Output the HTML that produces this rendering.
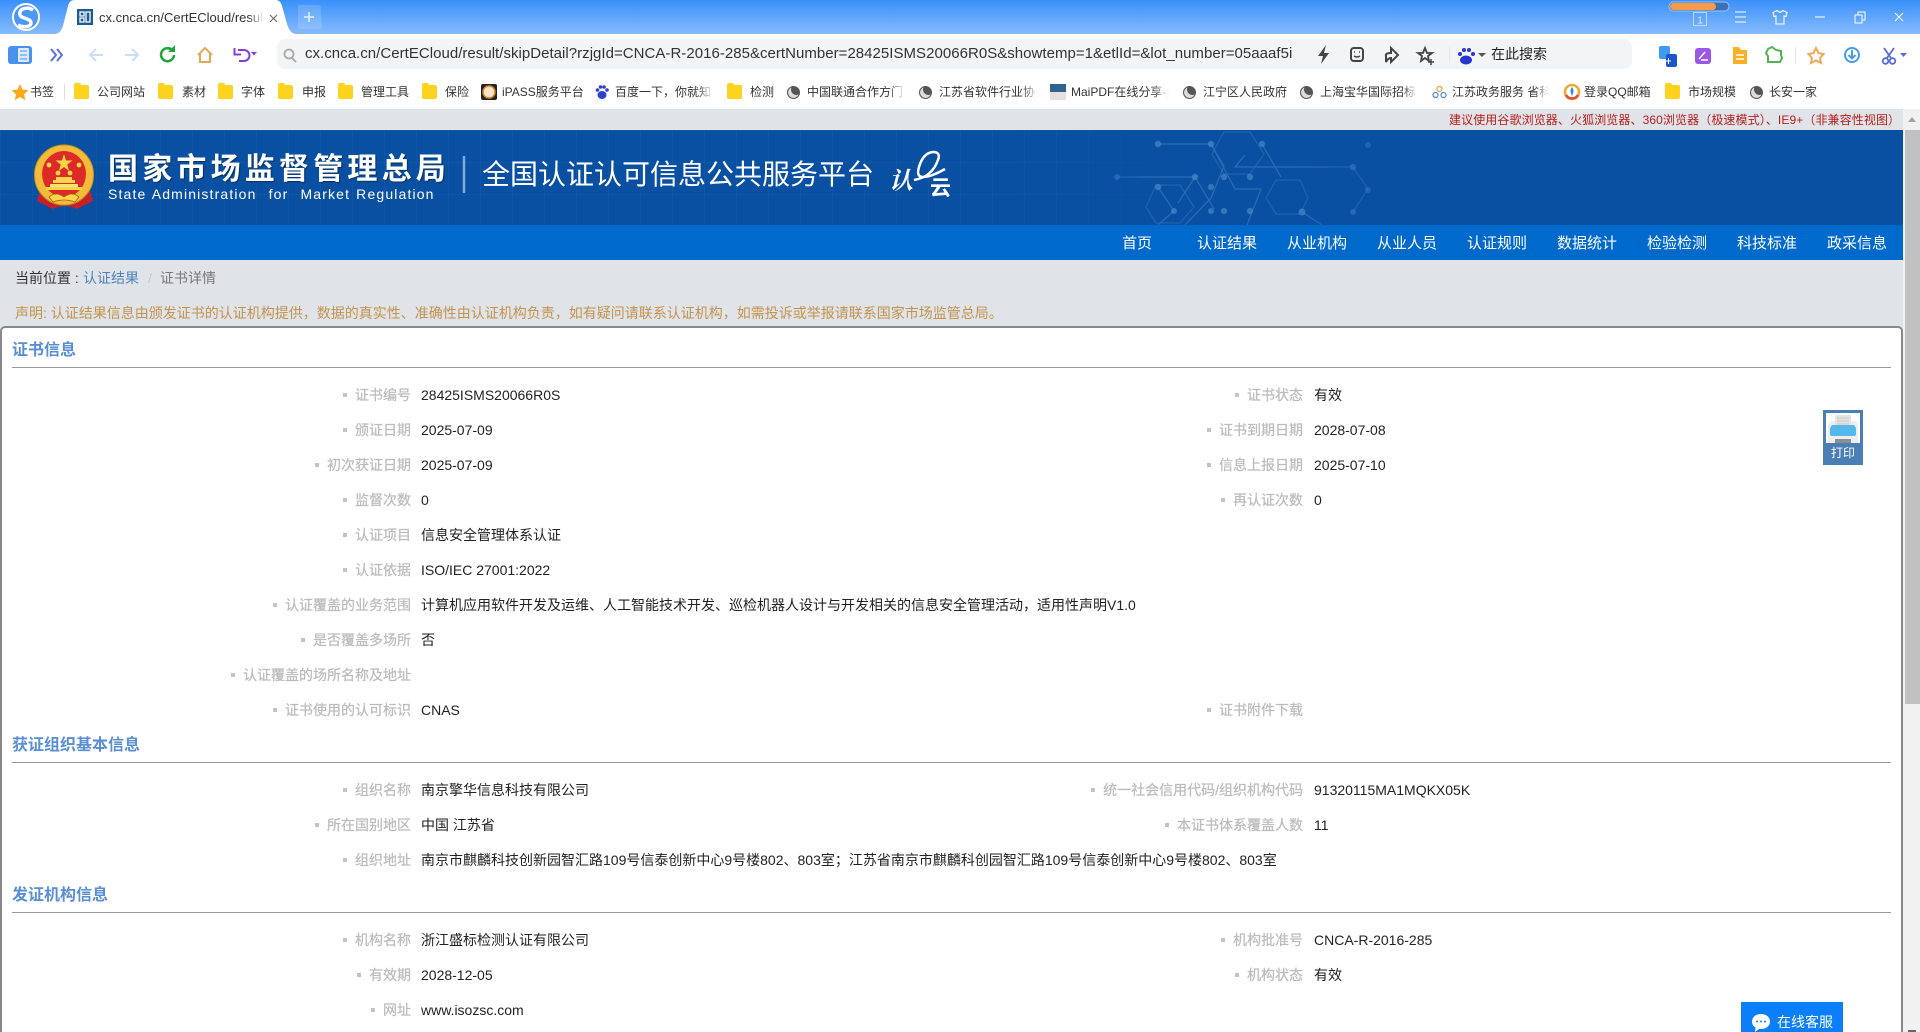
<!DOCTYPE html>
<html lang="zh-CN"><head><meta charset="utf-8"><title>证书详情</title>
<style>
*{box-sizing:border-box;margin:0;padding:0}
html,body{width:1920px;height:1032px;overflow:hidden;background:#e0e4e8;font-family:"Liberation Sans","Noto Sans CJK SC",sans-serif;font-size:14px;color:#222}
#wrap{position:relative;width:1920px;height:1032px;overflow:hidden}
.a{position:absolute;white-space:nowrap}
#tabs{left:0;top:0;width:1920px;height:34px;background:linear-gradient(#3a90fb,#87bbfd)}
#addr{left:0;top:34px;width:1920px;height:40px;background:#fff}
#pill{left:277px;top:39px;width:1355px;height:30px;background:#f3f4f6;border-radius:8px}
#bm{left:0;top:74px;width:1920px;height:35px;background:#fff}
.b{top:84px;font-size:12px;line-height:17px;color:#333}
.f{top:85px;width:15px;height:14px;background:#fdd31d;border-radius:2px}
.f:before{content:"";position:absolute;left:0;top:-2px;width:7px;height:3px;background:#fdd31d;border-radius:2px 2px 0 0}
.g{top:86px;width:13px;height:13px;border-radius:50%;background:#555;border:1.5px solid #555;box-shadow:inset 3px -3px 0 #ddd}
.fade{overflow:hidden}
.fade:after{content:"";position:absolute;right:0;top:0;width:16px;height:100%;background:linear-gradient(90deg,rgba(255,255,255,0),#fff)}
#hd{left:0;top:130px;width:1903px;height:95px;background:#0a50a2}
#nav{left:0;top:225px;width:1903px;height:35px;background:#0069cc}
.n{top:234px;color:#fff;font-size:15px;line-height:20px}
#panel{left:0;top:326px;width:1903px;height:706px;background:#fff;border:2px solid #888;border-bottom:0;border-radius:5px 5px 0 0}
.h{left:12px;color:#5a8ed2;font-size:16px;font-weight:bold;line-height:22px}
.l{left:12px;width:1879px;height:1px;background:#999}
.k{text-align:right;font-size:14px;line-height:20px;color:#bcbcbc;-webkit-text-stroke:.25px #bcbcbc}
.k:before{content:"";display:inline-block;width:4px;height:4px;background:#c4c4c4;margin-right:8px;vertical-align:3px}
.k1{left:0;width:411px}
.k2{left:900px;width:403px}
.v{font-size:14px;line-height:20px;color:#222}
.v1{left:421px}.v2{left:1314px}
</style></head><body><div id="wrap">

<div class="a" id="tabs"></div>
<svg class="a" style="left:0;top:0" width="330" height="34" viewBox="0 0 330 34">
<circle cx="26" cy="17" r="13" fill="#4d97f5" stroke="#fff" stroke-width="2"/>
<path d="M33 10C27 6 18 9 20 15c1.500 4 11 3 11 8 0 4-8 5-13 2" fill="none" stroke="#fff" stroke-width="3.500"/>
<path d="M54 34C60 34 62 30 64 22L68 6C69 2 71 0 75 0H275C279 0 281 2 282 6L287 24C289 30 291 34 297 34Z" fill="#fff"/>
<rect x="77" y="9" width="16" height="16" fill="#1c5d91"/>
<path d="M80 12h4v4h-4zM80 18h4v4h-4zM86 12h4v10h-4z" fill="none" stroke="#fff" stroke-width="1.300"/>
<path d="M270 15l7 7M277 15l-7 7" stroke="#666" stroke-width="1"/>
<path d="M298 5h20a3 3 0 0 1 3 3l1 18a3 3 0 0 1-3 3h-18a3 3 0 0 1-3-3z" fill="#fff" opacity=".15"/>
<path d="M309 12v10M304 17h10" stroke="#fff" stroke-width="1.800" opacity=".7"/>
</svg>
<div class="a fade" style="left:99px;top:9px;width:165px;font-size:13px;line-height:18px;color:#333">cx.cnca.cn/CertECloud/result/</div>
<svg class="a" style="left:1660px;top:0" width="260" height="34" viewBox="0 0 260 34">
<rect x="9" y="2" width="60" height="9" rx="4.500" fill="#3b70b5" stroke="#9cc4f2"/>
<rect x="10" y="3" width="46" height="7" rx="3.500" fill="#f99a4a"/>
<rect x="33.500" y="12.500" width="13" height="13" fill="none" stroke="#bcd9fb"/>
<text x="40" y="23.500" font-size="10" font-family="Liberation Sans" fill="#d8e9fd" text-anchor="middle">1</text>
<path d="M75 12h11M75 17h11M75 22h11" stroke="#fff" stroke-width="1"/>
<path d="M120 12.500l-3-2-4 2 1 4 2-.5v8h8v-8l2 .5 1-4-4-2z" fill="none" stroke="#fff" stroke-width="1.100"/>
<path d="M155 17h10" stroke="#fff" stroke-width="1"/>
<path d="M195 15h7v8h-7zM198 15v-3h7v8h-3" fill="none" stroke="#fff" stroke-width="1"/>
<path d="M235 13l8 8M243 13l-8 8" stroke="#fff" stroke-width="1"/>
</svg>

<div class="a" id="addr"></div>
<div class="a" id="pill"></div>
<svg class="a" style="left:0;top:34px" width="277" height="40" viewBox="0 0 277 40">
<rect x="8" y="12" width="24" height="18" rx="3" fill="#4a90ee"/><rect x="18" y="14" width="11" height="14" rx="1" fill="#dceafc"/>
<path d="M20 17h7M20 21h7M20 25h7" stroke="#4a90ee"/>
<path d="M51 15l5 6-5 6M57 15l5 6-5 6" fill="none" stroke="#5b6fe2" stroke-width="2"/>
<path d="M103 21H90M96 15l-6 6 6 6" fill="none" stroke="#c8dff8" stroke-width="2"/>
<path d="M125 21h13M132 15l6 6-6 6" fill="none" stroke="#c8dff8" stroke-width="2"/>
<path d="M174 21a6.500 6.500 0 1 1-2-5" fill="none" stroke="#1fa63a" stroke-width="2.500"/><path d="M175 11v7h-7z" fill="#1fa63a"/>
<path d="M198 21l7-7 7 7M200 20v8h10v-8" fill="none" stroke="#e0a958" stroke-width="2"/>
<path d="M238 16h6a5.500 5.500 0 0 1 0 11h-5M234.500 14v6.500h6.500" fill="none" stroke="#8a3fd1" stroke-width="2"/><path d="M251 18h6l-3 3.500z" fill="#8a3fd1"/>
</svg>
<svg class="a" style="left:280px;top:46px" width="20" height="18"><circle cx="9" cy="8" r="4.500" fill="none" stroke="#aaa" stroke-width="1.800"/><path d="M12 12l4 4" stroke="#aaa" stroke-width="1.800"/></svg>
<div class="a" style="left:305px;top:44px;width:990px;overflow:hidden;font-size:15px;line-height:20px;letter-spacing:.03px;color:#333">cx.cnca.cn/CertECloud/result/skipDetail?rzjgId=CNCA-R-2016-285&amp;certNumber=28425ISMS20066R0S&amp;showtemp=1&amp;etlId=&amp;lot_number=05aaaf5i</div>
<svg class="a" style="left:1310px;top:34px" width="180" height="40" viewBox="0 0 180 40">
<path d="M16 11l-8 11h5l-2 8 8-11h-5z" fill="#444"/>
<rect x="41" y="14" width="12" height="13" rx="3" fill="none" stroke="#444" stroke-width="2"/><path d="M44 18h1M49 18h1M44 22q3 2 6 0" stroke="#444" stroke-width="1.500" fill="none"/>
<path d="M76 28v-6q-1-3 5-3v-5l7 7-7 7v-4q-3 0-5 4z" fill="none" stroke="#444" stroke-width="2"/>
<path d="M115 14l2 5h5l-4 3 1 5-4-3-4 3 1-5-4-3h5z" fill="none" stroke="#444" stroke-width="1.800"/><path d="M121 25v6M118 28h6" stroke="#444" stroke-width="1.500"/>
<path d="M139.500 13v16" stroke="#e6e7ea"/>
<ellipse cx="156" cy="26" rx="6" ry="4.500" fill="#2a35d0"/><circle cx="150" cy="20" r="2" fill="#2a35d0"/><circle cx="154" cy="16" r="2" fill="#2a35d0"/><circle cx="159" cy="16" r="2" fill="#2a35d0"/><circle cx="163" cy="20" r="2" fill="#2a35d0"/>
<path d="M168 19h8l-4 4z" fill="#555"/>
</svg>
<div class="a" style="left:1491px;top:44px;font-size:14px;line-height:20px;color:#222">在此搜索</div>
<svg class="a" style="left:1650px;top:34px" width="270" height="40" viewBox="0 0 270 40">
<rect x="9" y="12" width="11" height="13" rx="2" fill="#3f9bf2"/><rect x="16" y="20" width="11" height="13" rx="2" fill="#1d55d0"/>
<path d="M18.500 24v6M16 27h5" stroke="#fff"/>
<rect x="45" y="14" width="16" height="16" rx="3" fill="#9a58e8"/><path d="M49 25l6-7M51 26h7" stroke="#fff" stroke-width="1.500"/>
<path d="M83 13h6l2 3h6v14H83z" fill="#fbb024"/><path d="M86 21h8M94 25h-8" stroke="#fff" stroke-width="1.500"/>
<path d="M118 15l4-2 4 3 5 1v4l1 3-2 4h-12v-6l-2-3z" fill="none" stroke="#52b254" stroke-width="2"/>
<path d="M145.500 13v16" stroke="#e2e2e2"/>
<path d="M166 14l2.500 5 5 1-3.500 4 1 5-5-2.500-5 2.500 1-5-3.500-4 5-1z" fill="none" stroke="#f0a85a" stroke-width="2"/>
<circle cx="202" cy="21" r="7" fill="none" stroke="#4a9aec" stroke-width="2"/><path d="M202 16v8M198.500 21l3.500 3.500 3.500-3.500" stroke="#4a9aec" stroke-width="2" fill="none"/>
<path d="M234 14l7 10M244 14l-7 10" stroke="#5b6ad6" stroke-width="1.800"/><circle cx="235.500" cy="27" r="2.800" fill="none" stroke="#5b6ad6" stroke-width="1.800"/><circle cx="242.500" cy="27" r="2.800" fill="none" stroke="#5b6ad6" stroke-width="1.800"/>
<path d="M250 19h7l-3.500 4z" fill="#5b6ad6"/>
</svg>

<div class="a" id="bm"></div>
<svg class="a" style="left:10px;top:83px" width="20" height="18"><path d="M10 1l2.500 5.500 6 .7-4.500 4 1.300 6L10 14l-5.300 3.200 1.300-6-4.500-4 6-.7z" fill="#fba81a"/></svg>
<div class="a b" style="left:30px">书签</div>
<div class="a" style="left:64px;top:84px;width:1px;height:16px;background:#ddd"></div>
<div class="a f" style="left:74px"></div><div class="a b" style="left:97px">公司网站</div>
<div class="a f" style="left:158px"></div><div class="a b" style="left:182px">素材</div>
<div class="a f" style="left:218px"></div><div class="a b" style="left:241px">字体</div>
<div class="a f" style="left:278px"></div><div class="a b" style="left:302px">申报</div>
<div class="a f" style="left:338px"></div><div class="a b" style="left:361px">管理工具</div>
<div class="a f" style="left:422px"></div><div class="a b" style="left:445px">保险</div>
<svg class="a" style="left:481px;top:84px" width="16" height="16"><rect width="16" height="16" rx="2" fill="#222"/><circle cx="8" cy="8" r="6" fill="#f6e3c8" stroke="#d28a2a" stroke-width="1.500"/></svg>
<div class="a b" style="left:502px">iPASS服务平台</div>
<svg class="a" style="left:595px;top:84px" width="14" height="16"><ellipse cx="7" cy="11" rx="4.500" ry="4" fill="#3140c8"/><circle cx="2.500" cy="6" r="1.800" fill="#3140c8"/><circle cx="5.500" cy="3" r="1.800" fill="#3140c8"/><circle cx="9" cy="3" r="1.800" fill="#3140c8"/><circle cx="12" cy="6" r="1.800" fill="#3140c8"/></svg>
<div class="a b fade" style="left:615px;width:98px">百度一下，你就知道</div>
<div class="a f" style="left:727px"></div><div class="a b" style="left:750px">检测</div>
<div class="a g" style="left:787px"></div><div class="a b fade" style="left:807px;width:98px">中国联通合作方门户</div>
<div class="a g" style="left:919px"></div><div class="a b fade" style="left:939px;width:99px">江苏省软件行业协会</div>
<svg class="a" style="left:1050px;top:84px" width="16" height="16"><rect width="16" height="8" fill="#2e6290"/><rect y="8" width="16" height="8" fill="#eadde2"/></svg>
<div class="a b fade" style="left:1071px;width:98px">MaiPDF在线分享-免</div>
<div class="a g" style="left:1183px"></div><div class="a b" style="left:1203px">江宁区人民政府</div>
<div class="a g" style="left:1300px"></div><div class="a b fade" style="left:1320px;width:98px">上海宝华国际招标有</div>
<svg class="a" style="left:1432px;top:85px" width="15" height="14"><circle cx="7.500" cy="4" r="2.500" fill="none" stroke="#e9a14c" stroke-width="1.300"/><circle cx="3.500" cy="10" r="2.500" fill="none" stroke="#5b8fd0" stroke-width="1.300"/><circle cx="11.500" cy="10" r="2.500" fill="none" stroke="#5b8fd0" stroke-width="1.300"/></svg>
<div class="a b fade" style="left:1452px;width:98px">江苏政务服务 省科技</div>
<svg class="a" style="left:1563px;top:83px" width="18" height="18"><circle cx="9" cy="9" r="7" fill="#fff" stroke="#f2a82c" stroke-width="2.500"/><path d="M3 12a7 7 0 0 0 12 0" fill="none" stroke="#e54b3c" stroke-width="2.500"/><path d="M9 4q3 3 0 9q-3-6 0-9" fill="#2a8fe8"/></svg>
<div class="a b" style="left:1584px">登录QQ邮箱</div>
<div class="a f" style="left:1665px"></div><div class="a b" style="left:1688px">市场规模</div>
<div class="a g" style="left:1750px"></div><div class="a b" style="left:1769px">长安一家</div>

<div class="a" style="left:1449px;top:112px;font-size:12px;line-height:16px;letter-spacing:.1px;color:#b71c1c">建议使用谷歌浏览器、火狐浏览器、360浏览器（极速模式）、IE9+（非兼容性视图）</div>

<div class="a" style="left:1903px;top:109px;width:17px;height:923px;background:#f1f1f1"></div>
<div class="a" style="left:1905px;top:130px;width:15px;height:574px;background:#c1c1c1"></div>
<svg class="a" style="left:1904px;top:112px" width="16" height="14"><path d="M4 10l4-5 4 5z" fill="#a3a3a3"/></svg>
<svg class="a" style="left:1904px;top:1028px" width="16" height="4"><rect x="4" y="2" width="8" height="2" fill="#666"/></svg>

<div class="a" id="hd"></div>
<svg class="a" style="left:0;top:130px" width="1903" height="95" viewBox="0 0 1903 95">
<defs>
<pattern id="gr" width="32" height="32" patternUnits="userSpaceOnUse"><path d="M32 0H0V32" fill="none" stroke="#4a8ad0" stroke-width="1" opacity=".2"/></pattern>
<linearGradient id="fg" x1="0" x2="1"><stop offset="0" stop-color="#fff"/><stop offset=".8" stop-color="#fff"/><stop offset="1" stop-color="#000"/></linearGradient>
<mask id="gm"><rect width="1200" height="95" fill="url(#fg)"/></mask>
<linearGradient id="hf" x1="0" x2="1"><stop offset="0" stop-color="#fff" stop-opacity=".15"/><stop offset=".15" stop-color="#fff"/><stop offset=".6" stop-color="#fff"/><stop offset="1" stop-color="#fff" stop-opacity=".05"/></linearGradient>
<mask id="hm" maskUnits="userSpaceOnUse" x="1090" y="0" width="350" height="95"><rect x="1090" width="350" height="95" fill="url(#hf)"/></mask>
<radialGradient id="glow" cx=".5" cy="1" r=".5"><stop offset="0" stop-color="#4a9ad4" stop-opacity=".5"/><stop offset="1" stop-color="#4a9ad4" stop-opacity="0"/></radialGradient>
</defs>
<rect width="1200" height="95" fill="url(#gr)" mask="url(#gm)"/>
<ellipse cx="1280" cy="95" rx="110" ry="70" fill="url(#glow)"/>
<g mask="url(#hm)" opacity=".65">
<g fill="none" stroke="#6ba6de" stroke-width="1.200" opacity=".5">
<path d="M1158 14h53l13 22-13 32-26 27M1211 14l24 45h26M1117 47h78l19 32M1195 47l-17 26M1261 59l-14 36M1353 37h-118l10-12M1158 57l16 24-16 14M1262 14l19 33M1353 82l15-23-15-22M1302 82l20 13"/>
<path d="M1180 55l14 22-14 16h-24l-10-16 10-22zM1250 2l14 22-14 20h-26l-12-20 12-22zM1300 50l8 18-8 16h-24l-10-16 10-18z" opacity=".7"/>
</g>
<g fill="#6da9e0" opacity=".65">
<circle cx="1158" cy="14" r="3.200"/><circle cx="1211" cy="14" r="3.200"/><circle cx="1262" cy="14" r="3.200"/><circle cx="1368" cy="15" r="3"/><circle cx="1117" cy="47" r="3"/><circle cx="1195" cy="47" r="3.200"/><circle cx="1224" cy="47" r="3.200"/><circle cx="1250" cy="47" r="3.200"/><circle cx="1353" cy="37" r="3.200"/><circle cx="1158" cy="57" r="3.200"/><circle cx="1211" cy="57" r="3.200"/><circle cx="1368" cy="60" r="3"/><circle cx="1174" cy="81" r="3"/><circle cx="1211" cy="81" r="3"/><circle cx="1224" cy="81" r="3.200"/><circle cx="1250" cy="81" r="3.200"/><circle cx="1302" cy="82" r="3.500"/><circle cx="1353" cy="82" r="3"/>
</g></g>
<!-- emblem -->
<g transform="translate(35 17)">
<path d="M6 40L2 54l16 8q12-6 24 0l16-8-4-14z" fill="#c8202a"/>
<ellipse cx="29" cy="28" rx="29.500" ry="30" fill="#f2bc3a" stroke="#c98f22" stroke-width="1"/>
<ellipse cx="29" cy="27" rx="22" ry="23" fill="#de2a27"/>
<path d="M29 7l2 6.500h6.500l-5.300 4 2 6.500-5.200-4-5.200 4 2-6.500-5.300-4H27z" fill="#f8d648"/>
<g fill="#f8d648"><circle cx="14" cy="18" r="2.400"/><circle cx="44" cy="18" r="2.400"/><circle cx="23" cy="26" r="2.400"/><circle cx="35" cy="26" r="2.400"/>
<rect x="18" y="33" width="22" height="3"/><rect x="21" y="30" width="16" height="3"/><rect x="11" y="40" width="36" height="3"/><rect x="15" y="37" width="28" height="3" fill="#fbe17b"/></g>
<path d="M14 50q7-6 15 0q8-6 15 0l-4 5q-11-4-22 0z" fill="#f8d648" stroke="#a8571d" stroke-width=".7"/>
</g>
<path d="M464 26V63" stroke="#7ea9d8" stroke-width="2.500"/>
<path d="M914 50q18-3 24-20q3-8-5-8q-10 1-14 15q-3 10 4 10q8 0 22-8" fill="none" stroke="#fff" stroke-width="2.500"/>
</svg>
<div class="a" style="left:108px;top:149px;font-size:30px;font-weight:bold;line-height:42px;letter-spacing:4.200px;color:#fff;text-shadow:1px 1px 1px #06305f">国家市场监督管理总局</div>
<div class="a" style="left:108px;top:185px;font-size:14px;line-height:18px;letter-spacing:1.150px;word-spacing:1px;color:#fff">State Administration&nbsp; for&nbsp; Market Regulation</div>
<div class="a" style="left:482px;top:155px;font-size:28px;line-height:40px;color:#fff">全国认证认可信息公共服务平台</div>
<div class="a" style="left:889px;top:163px;font-size:24px;line-height:32px;font-style:italic;font-weight:bold;color:#fff;font-family:'Noto Serif CJK SC',serif">认</div>
<div class="a" style="left:930px;top:176px;font-size:21px;line-height:26px;font-weight:bold;color:#fff">云</div>

<div class="a" id="nav"></div>
<div class="a n" style="left:1122px">首页</div>
<div class="a n" style="left:1197px">认证结果</div>
<div class="a n" style="left:1287px">从业机构</div>
<div class="a n" style="left:1377px">从业人员</div>
<div class="a n" style="left:1467px">认证规则</div>
<div class="a n" style="left:1557px">数据统计</div>
<div class="a n" style="left:1647px">检验检测</div>
<div class="a n" style="left:1737px">科技标准</div>
<div class="a n" style="left:1827px">政采信息</div>

<div class="a" style="left:15px;top:268px;font-size:14px;line-height:20px;color:#333">当前位置 :</div>
<div class="a" style="left:83px;top:268px;font-size:14px;line-height:20px;color:#4f83b8">认证结果</div>
<div class="a" style="left:148px;top:268px;font-size:14px;line-height:20px;color:#c4c8cc">/</div>
<div class="a" style="left:160px;top:268px;font-size:14px;line-height:20px;color:#777">证书详情</div>
<div class="a" style="left:15px;top:303px;font-size:14px;line-height:20px;color:#c4924c">声明: 认证结果信息由颁发证书的认证机构提供，数据的真实性、准确性由认证机构负责，如有疑问请联系认证机构，如需投诉或举报请联系国家市场监管总局。</div>

<div class="a" id="panel"></div>

<div class="a h" style="top:340px">证书信息</div><div class="a l" style="top:367px"></div>
<div class="a k k1" style="top:385px">证书编号</div><div class="a v v1" style="top:385px">28425ISMS20066R0S</div>
<div class="a k k2" style="top:385px">证书状态</div><div class="a v v2" style="top:385px">有效</div>
<div class="a k k1" style="top:420px">颁证日期</div><div class="a v v1" style="top:420px">2025-07-09</div>
<div class="a k k2" style="top:420px">证书到期日期</div><div class="a v v2" style="top:420px">2028-07-08</div>
<div class="a k k1" style="top:455px">初次获证日期</div><div class="a v v1" style="top:455px">2025-07-09</div>
<div class="a k k2" style="top:455px">信息上报日期</div><div class="a v v2" style="top:455px">2025-07-10</div>
<div class="a k k1" style="top:490px">监督次数</div><div class="a v v1" style="top:490px">0</div>
<div class="a k k2" style="top:490px">再认证次数</div><div class="a v v2" style="top:490px">0</div>
<div class="a k k1" style="top:525px">认证项目</div><div class="a v v1" style="top:525px">信息安全管理体系认证</div>
<div class="a k k1" style="top:560px">认证依据</div><div class="a v v1" style="top:560px">ISO/IEC 27001:2022</div>
<div class="a k k1" style="top:595px">认证覆盖的业务范围</div><div class="a v v1" style="top:595px">计算机应用软件开发及运维、人工智能技术开发、巡检机器人设计与开发相关的信息安全管理活动，适用性声明V1.0</div>
<div class="a k k1" style="top:630px">是否覆盖多场所</div><div class="a v v1" style="top:630px">否</div>
<div class="a k k1" style="top:665px">认证覆盖的场所名称及地址</div>
<div class="a k k1" style="top:700px">证书使用的认可标识</div><div class="a v v1" style="top:700px">CNAS</div>
<div class="a k k2" style="top:700px">证书附件下载</div>

<div class="a h" style="top:735px">获证组织基本信息</div><div class="a l" style="top:762px"></div>
<div class="a k k1" style="top:780px">组织名称</div><div class="a v v1" style="top:780px">南京擎华信息科技有限公司</div>
<div class="a k k2" style="top:780px">统一社会信用代码/组织机构代码</div><div class="a v v2" style="top:780px">91320115MA1MQKX05K</div>
<div class="a k k1" style="top:815px">所在国别地区</div><div class="a v v1" style="top:815px">中国 江苏省</div>
<div class="a k k2" style="top:815px">本证书体系覆盖人数</div><div class="a v v2" style="top:815px">11</div>
<div class="a k k1" style="top:850px">组织地址</div><div class="a v v1" style="top:850px">南京市麒麟科技创新园智汇路109号信泰创新中心9号楼802、803室；江苏省南京市麒麟科创园智汇路109号信泰创新中心9号楼802、803室</div>

<div class="a h" style="top:885px">发证机构信息</div><div class="a l" style="top:912px"></div>
<div class="a k k1" style="top:930px">机构名称</div><div class="a v v1" style="top:930px">浙江盛标检测认证有限公司</div>
<div class="a k k2" style="top:930px">机构批准号</div><div class="a v v2" style="top:930px">CNCA-R-2016-285</div>
<div class="a k k1" style="top:965px">有效期</div><div class="a v v1" style="top:965px">2028-12-05</div>
<div class="a k k2" style="top:965px">机构状态</div><div class="a v v2" style="top:965px">有效</div>
<div class="a k k1" style="top:1000px">网址</div><div class="a v v1" style="top:1000px">www.isozsc.com</div>

<div class="a" style="left:1823px;top:410px;width:40px;height:55px;background:#4a7fb5"></div>
<svg class="a" style="left:1826px;top:413px" width="34" height="30" viewBox="0 0 34 30"><rect width="34" height="30" fill="#fff"/><path d="M2 14q0-6 4-6h22q4 0 4 6v16H2z" fill="#eee"/><rect x="9" y="2" width="16" height="14" fill="#e4e4e4"/><path d="M11 5h12M11 8h12M11 11h12" stroke="#c8c8c8"/><path d="M6 12h22l2 3v6q0 2-2 2H6q-2 0-2-2v-6z" fill="#54b8ea"/><rect x="9" y="26" width="16" height="4" fill="#8a8f94"/></svg>
<div class="a" style="left:1831px;top:444px;font-size:12px;line-height:18px;color:#fff">打印</div>

<div class="a" style="left:1741px;top:1002px;width:102px;height:30px;background:#0b7ffa"></div>
<svg class="a" style="left:1751px;top:1013px" width="20" height="19"><path d="M10 1c5 0 9 3 9 7.500S15 16 10 16q-1 0-2 0l-4 3 .5-4.500Q1 12.500 1 8.500C1 4 5 1 10 1z" fill="#fff"/><circle cx="6" cy="8.500" r="1" fill="#0b7ffa"/><circle cx="10" cy="8.500" r="1" fill="#0b7ffa"/><circle cx="14" cy="8.500" r="1" fill="#0b7ffa"/></svg>
<div class="a" style="left:1777px;top:1012px;font-size:14px;line-height:20px;color:#fff">在线客服</div>
</div></body></html>
